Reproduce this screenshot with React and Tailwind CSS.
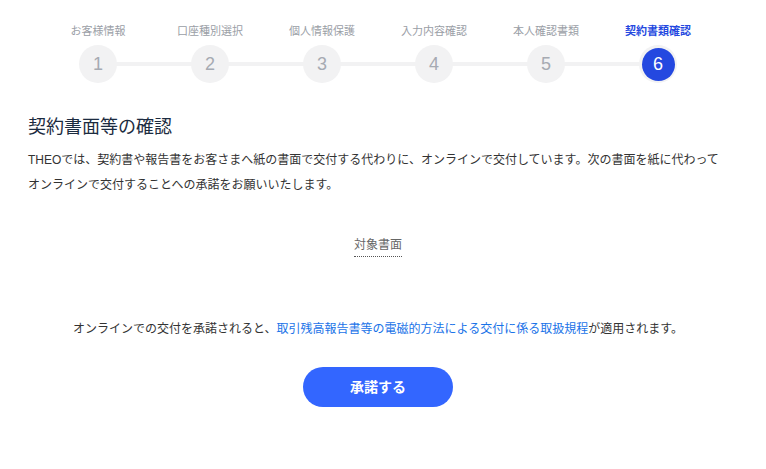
import React from "react";

const steps = ["お客様情報", "口座種別選択", "個人情報保護", "入力内容確認", "本人確認書類", "契約書類確認"];

export default function App() {
  return (
    <div
      className="w-[766px] h-[469px] bg-white text-[#333]"
      style={{ fontFamily: '"Liberation Sans", "Noto Sans CJK JP", sans-serif' }}
    >
      <div className="pt-[24px] pl-[42px]">
        <div className="relative flex w-[672px]">
          <div className="absolute left-[56px] right-[56px] top-[38px] h-[4px] bg-[#f2f2f3]" />
          {steps.map((s, i) => {
            const active = i === 5;
            return (
              <div key={s} className="relative flex w-[112px] flex-col items-center">
                <div
                  className={`h-[14px] text-[11px] leading-[14px] ${
                    active ? "font-bold text-[#2448e0]" : "text-[#9a9ea6]"
                  }`}
                >
                  {s}
                </div>
                <div className="mt-[7px] flex h-[38px] w-[38px] items-center justify-center rounded-full bg-[#f2f2f3]">
                  {active ? (
                    <div className="flex h-[33px] w-[33px] items-center justify-center rounded-full bg-[#2448e0] text-[18px] text-white">
                      6
                    </div>
                  ) : (
                    <span className="text-[18px] text-[#a6aab2]">{i + 1}</span>
                  )}
                </div>
              </div>
            );
          })}
        </div>
      </div>

      <div className="pl-[28px] pr-[38px]">
        <h1 className="mt-[31px] text-[18px] leading-[26px] text-[#1c2b40]">契約書面等の確認</h1>
        <p className="mt-[8px] text-[12px] leading-[25px] text-[#333]">
          THEOでは、契約書や報告書をお客さまへ紙の書面で交付する代わりに、オンラインで交付しています。次の書面を紙に代わって
          <br />
          オンラインで交付することへの承諾をお願いいたします。
        </p>
        <div className="mt-[39px] flex justify-center">
          <span className="border-b border-dotted border-[#555] pb-[3px] text-[12px] leading-[16px] text-[#666]">
            対象書面
          </span>
        </div>
        <p className="mt-[63px] text-center text-[12px] leading-[18px] text-[#333]">
          オンラインでの交付を承諾されると、
          <span className="text-[#1a73e8]">取引残高報告書等の電磁的方法による交付に係る取扱規程</span>
          が適用されます。
        </p>
        <div className="mt-[29px] flex justify-center">
          <button className="h-[40px] w-[150px] rounded-full bg-[#3366ff] text-[14px] font-semibold text-white">
            承諾する
          </button>
        </div>
      </div>
    </div>
  );
}
